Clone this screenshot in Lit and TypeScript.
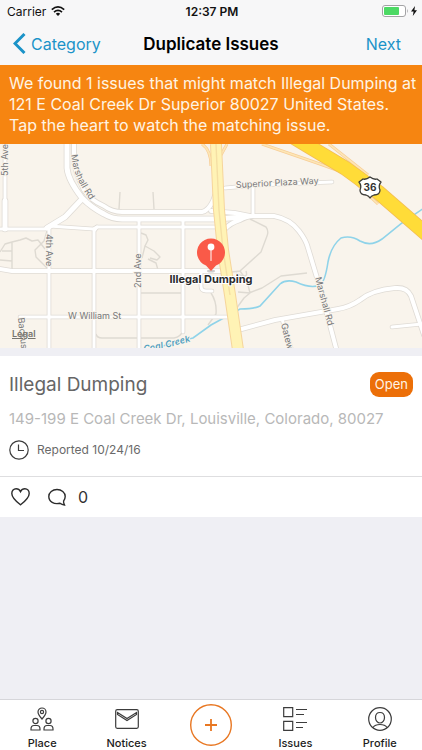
import { LitElement, html, svg, css } from "lit";
import { customElement } from "lit/decorators.js";

const font = css`Inter, Roboto, "Liberation Sans", sans-serif`;

/* Street geometry, in map units. */
const streets: { d: string; w: number }[] = [
  { d: "M5 144V200", w: 3 },
  { d: "M5 201V229", w: 5 },
  { d: "M0 229H45L49 226L93 229L97 227H222", w: 3 },
  { d: "M82 199L65 217L47 228", w: 5 },
  { d: "M49 228V348", w: 3 },
  { d: "M97 227L94 231V348", w: 3 },
  { d: "M139 219V348", w: 3 },
  { d: "M183 219V332", w: 3 },
  { d: "M0 269L12 271H226", w: 4 },
  { d: "M20 317H230", w: 3 },
  { d: "M74 144V160Q75 172 84 190Q90 200 104 206Q112 212 122 212H202Q208 211 213 201L217 190", w: 4 },
  { d: "M67 144V168Q68 180 82 198Q92 208 104 214Q112 219 122 219H216L244 217", w: 5 },
  { d: "M211 211L235 213L250 216", w: 4 },
  { d: "M225 188L258 185L332 182", w: 3 },
  { d: "M253 186V215", w: 3 },
  { d: "M224 230Q230 223 240 220Q247 216 254 216H274Q290 219 299 231Q306 240 308 248L321 291L336 348", w: 4 },
  { d: "M238 330L275 320L338 309Q350 307 360 300Q372 290 395 288Q407 287 411 296L424 335", w: 4 },
  { d: "M392 327L422 324", w: 3 },
  { d: "M282 319L291 348", w: 3 },
  { d: "M201 272V286Q201 291 206 291H212", w: 3 },
];

const paths =
  "M120 192L119 209M153 192L154 209M141 293H182M96 334Q97 338 102 338H174Q181 337 183 330" +
  "M250 219L266 227Q269 231 267 236L261 252L240 271L232 272M307 273L281 276L262 288L249 293" +
  "M240 271L247 281L250 293L244 298L236 309M250 293L238 292M236 273Q249 280 246 271" +
  "M0 252L5 244L12 242L20 240L26 238L32 241L38 240L45 249M0 260L12 261M2 251H12M12 242V269M47 231L44 241L35 250L36 257L48 269" +
  "M141 233L146 235L148 240L145 246L154 251L160 257L157 260L150 258M145 246L142 258M148 259L156 263L158 270" +
  "M211 293Q217 302 216 314L208 325";

const creek =
  "M150 350Q178 341 193 338L211 325L240 309Q254 309 260 306L280 284Q286 279 296 282Q311 289 320 285Q325 282 328 262Q331 246 341 238Q351 235 360 241Q371 247 382 239L402 223L424 208";

const ramps = "M202 144Q211 150 211 166M227 144L221 155M262 144L320 164L345 173L378 204M329 144L368 175";
const highway = "M290 135L305 144L345 168L378 192L430 237";

const mapArt = svg`
  <rect y="144" width="422" height="204" fill="#f9f4ec" />
  <path d=${paths} fill="none" stroke="#dedad2" stroke-width="1.4" stroke-linejoin="round" />
  <path d=${creek} fill="none" stroke="#8fd3e9" stroke-width="1.6" />
  <g fill="none" stroke="#dfdbd5" stroke-linejoin="round" stroke-linecap="round">
    ${streets.map((s) => svg`<path d=${s.d} stroke-width=${s.w + 1.6} />`)}
  </g>
  <g fill="none" stroke="#ffffff" stroke-linejoin="round" stroke-linecap="round">
    ${streets.map((s) => svg`<path d=${s.d} stroke-width=${s.w} />`)}
  </g>
  <g fill="none" stroke-linejoin="round">
    <path d=${ramps} stroke="#f7cd96" stroke-width="3" />
    <path d=${ramps} stroke="#fde6b6" stroke-width="1.6" />
    <path d="M216 144L219 210L223 250L230 295L238 350" stroke="#f6d59b" stroke-width="12" />
    <path d="M216 144L219 210L223 250L230 295L238 350" stroke="#fff3b5" stroke-width="10" />
    <path d="M216 144L219 210L223 250L230 295" stroke="#f5dfa4" stroke-width="1.4" />
    <path d=${highway} stroke="#f3bd55" stroke-width="15" />
    <path d=${highway} stroke="#ffdc38" stroke-width="13.5" />
  </g>
  <path d="M363 179Q366 180 370 177Q374 180 377 179L381 182Q378 186 380 190Q380 195 374 195Q371 196 370 198Q369 196 366 195Q360 195 360 190Q362 186 359 182Z"
    fill="#fff" stroke="#3b3b38" stroke-width="1.3" stroke-linejoin="round" />
  <text class="shield" x="370" y="191" text-anchor="middle">36</text>
  <defs>
    <path id="curve" d="M71 155L73 166Q76 180 92 203" />
    <path id="water" d="M144 352Q168 348 195 340" />
  </defs>
  <g class="road">
    <text transform="translate(8 176) rotate(-90)">5th Ave</text>
    <text><textPath href="#curve">Marshall Rd</textPath></text>
    <text transform="translate(46 234) rotate(90)">4th Ave</text>
    <text transform="translate(141 288) rotate(-90)">2nd Ave</text>
    <text x="68" y="319">W William St</text>
    <text transform="translate(236 188) rotate(-3)">Superior Plaza Way</text>
    <text transform="translate(315 278) rotate(75)">Marshall Rd</text>
    <text transform="translate(281 324) rotate(76)">Gatew</text>
    <text transform="translate(18 318) rotate(84)">Backus</text>
    <text class="water"><textPath href="#water">Coal Creek</textPath></text>
  </g>
  <ellipse cx="211" cy="271" rx="4" ry="1.5" fill="#000" opacity=".2" />
  <path d="M211 271L206 265.5A14 14 0 1 1 216 265.5Z" fill="#fa5a48" />
  <path d="M211 248V260.500" stroke="#ffe3df" stroke-width="1.200" stroke-linecap="round" />
  <circle cx="211" cy="247" r="3.400" fill="#fff" />
  <text class="place" x="211" y="283" text-anchor="middle">Illegal Dumping</text>
`;

const icon = (w: number, h: number, art: unknown) =>
  html`<svg class="icon" width=${w} height=${h} viewBox="0 0 ${w} ${h}" aria-hidden="true">${art}</svg>`;

const tabs = [
  {
    label: "Place",
    art: icon(24, 24, svg`
      <path d="M12 12Q8 7.500 8 5A4 4 0 0 1 16 5Q16 7.500 12 12Z" /><circle cx="12" cy="5" r="1.600" />
      <circle cx="5.500" cy="14" r="2.600" /><circle cx="18.500" cy="14" r="2.600" />
      <path d="M1 23V22Q1 18.500 4 18.500H7Q10 18.500 10 22V23ZM14 23V22Q14 18.500 17 18.500H20Q23 18.500 23 22V23Z" />`),
  },
  {
    label: "Notices",
    art: icon(24, 24, svg`
      <rect x="0.700" y="2.700" width="22.600" height="18.600" rx="1.500" />
      <path d="M2.500 5.500L12 11.500L21.500 5.500V7.500L12 13.500L2.500 7.500Z" />`),
  },
  { label: "", art: html`` },
  {
    label: "Issues",
    art: icon(24, 24, svg`
      <path d="M.7 .7H9.700V9.700H.7ZM.7 14.300H9.700V23.300H.7ZM13 2.500H24M13 7.500H21M13 15.500H24M13 20.500H20" />`),
  },
  {
    label: "Profile",
    art: icon(24, 24, svg`
      <circle cx="12" cy="12" r="11.300" />
      <path d="M12 5.500C15 5.500 16.500 7.500 16.500 10.500S14.500 16 12 16S7.500 13.500 7.500 10.500S9 5.500 12 5.500ZM5 20.500Q7 17.500 12 17.500T19 20.500" />`),
  },
];

@customElement("issue-map")
class IssueMap extends LitElement {
  static styles = css`
    :host { display: block; position: relative; }
    .map { display: block; width: 100%; height: auto; font-family: ${font}; }
    .road { font-size: 9px; fill: #77787a; stroke: #f9f4ec; stroke-width: 2px; paint-order: stroke; }
    .water { fill: #4f9fc0; font-weight: 600; font-style: italic; }
    .shield { font-size: 10px; font-weight: 700; fill: #333; }
    .place { font-size: 11px; font-weight: 700; fill: #2b2b2b; stroke: #fff; stroke-width: 2px; paint-order: stroke; }
    .legal { position: absolute; left: 12px; bottom: 8px; font: 600 9px/12px ${font}; color: #77756f; }
  `;
  render() {
    return html`
      <svg class="map" viewBox="0 144 422 204" role="img" aria-label="Map of the reported issue">${mapArt}</svg>
      <a class="legal" href="#legal">Legal</a>
    `;
  }
}

@customElement("app-root")
class AppRoot extends LitElement {
  static styles = css`
    * { box-sizing: border-box; }
    :host { display: flex; flex-direction: column; min-height: 100vh; background: #efeff4; font-family: ${font}; color: #222; }
    button { font: inherit; color: inherit; background: none; border: 0; padding: 0; margin: 0; }
    .icon { display: block; fill: none; stroke: #3c3c3c; stroke-width: 1.2px; overflow: visible; }
    .status, .nav { display: grid; grid-template-columns: 1fr auto 1fr; align-items: center; background: #f7f7f8; }
    .status { height: 22px; padding: 0 5px 0 7px; font-size: 12px; color: #111; }
    .carrier, .power { display: flex; align-items: center; gap: 5px; }
    .power { justify-self: end; gap: 3px; }
    .time { font-weight: 600; }
    .nav { height: 43px; padding: 0 13px; font-size: 16px; color: #1b93c8; }
    .back { display: flex; align-items: center; gap: 5px; justify-self: start; }
    .next { justify-self: end; padding: 0 8px; }
    .title { margin: 0; font-size: 17px; font-weight: 600; color: #000; }
    .banner { margin: 0; padding: 8px 4px 8px 9px; background: #f68511; color: #fff4e4; font-size: 16px; line-height: 21px; }
    .card { margin-top: 8px; background: #fff; }
    .body { display: grid; gap: 12px; padding: 16px 9px; border-bottom: 1px solid #dedee0; }
    .head { display: flex; justify-content: space-between; align-items: center; }
    .name { margin: 0; font-size: 19px; line-height: 25px; font-weight: 400; color: #666; }
    .state { padding: 0 5px; border-radius: 9px; background: #ec6f08; color: #fff4e4; font-size: 13px; line-height: 25px; }
    .address { margin: 0; font-size: 15px; line-height: 19px; color: #b8b8b8; }
    .reported { display: flex; align-items: center; gap: 8px; font-size: 12px; line-height: 20px; color: #6a6a6a; }
    .actions { display: flex; align-items: center; height: 40px; padding: 0 11px; gap: 18px; }
    .comments { display: flex; align-items: center; gap: 12px; font-size: 16px; color: #333; }
    .actions .icon { stroke: #2c2c2c; stroke-width: 1.4px; }
    .tabs { display: grid; grid-template-columns: repeat(5, 1fr); margin-top: auto; height: 51px; background: #fff; border-top: 1px solid #d6d6da; }
    .tab { display: flex; flex-direction: column; align-items: center; gap: 5px; padding-top: 7px; font-size: 11px; line-height: 14px; font-weight: 500; color: #1c1c1c; }
    .add { display: grid; place-items: center; }
    .add .icon { stroke: #e87722; stroke-width: 1.4px; }
    .add .plus { stroke-width: 1.8px; }
  `;

  render() {
    return html`
      <div class="status">
        <span class="carrier">Carrier
          <svg width="14" height="10" viewBox="0 0 14 10" aria-hidden="true">
            <path d="M.8 3.600Q7-1.800 13.200 3.600M3 6.100Q7 2.700 11 6.100" fill="none" stroke="#111" stroke-width="1.700" />
            <path d="M4.800 7.700Q7 6 9.200 7.700L7 10Z" fill="#111" />
          </svg>
        </span>
        <span class="time">12:37 PM</span>
        <span class="power">
          <svg width="26" height="12" viewBox="0 0 26 12" aria-hidden="true">
            <rect x=".5" y=".5" width="23" height="11" rx="2.500" fill="#fff" stroke="#a3a3a5" />
            <rect x="2" y="2" width="15" height="8" rx="1" fill="#4cd964" />
            <path d="M25 4Q26.500 6 25 8Z" fill="#a3a3a5" />
          </svg>
          <svg width="6" height="10" viewBox="0 0 6 10" aria-hidden="true"><path d="M4 0L0 5.600H2.600L1.800 10L6 4.200H3.400Z" fill="#111" /></svg>
        </span>
      </div>
      <header class="nav">
        <button class="back">
          <svg width="13" height="21" viewBox="0 0 13 21" aria-hidden="true"><path d="M11.500 1L2 10.500L11.500 20" fill="none" stroke="#1b93c8" stroke-width="3" /></svg>
          Category
        </button>
        <h1 class="title">Duplicate Issues</h1>
        <button class="next">Next</button>
      </header>
      <p class="banner">
        We found 1 issues that might match Illegal Dumping at 121 E Coal Creek Dr Superior 80027 United States.<br />Tap the heart to watch the matching issue.
      </p>
      <issue-map></issue-map>
      <article class="card">
        <div class="body">
          <div class="head"><h2 class="name">Illegal Dumping</h2><span class="state">Open</span></div>
          <p class="address">149-199 E Coal Creek Dr, Louisville, Colorado, 80027</p>
          <div class="reported">
            ${icon(20, 20, svg`<circle cx="10" cy="10" r="9.200" /><path d="M9.500 4.500V10.500H15" />`)}
            <span>Reported 10/24/16</span>
          </div>
        </div>
        <div class="actions">
          <button aria-label="Watch">
            ${icon(19, 18, svg`<path d="M9.500 16.800C6 14 .8 10 .8 5.400C.8 2.700 2.700 .8 5.100 .8C7 .8 8.700 2 9.500 3.600C10.300 2 12 .8 13.900 .8C16.300 .8 18.200 2.700 18.200 5.400C18.200 10 13 14 9.500 16.800Z" />`)}
          </button>
          <button class="comments" aria-label="Comments: 0">
            ${icon(18, 18, svg`<path d="M9 1.500C13.500 1.500 17.200 4.300 17.200 8.500C17.200 10.800 16 12.400 15.600 13C15.300 14.500 15.800 15.500 16.500 17C14.500 16.800 13 16 12 15.200C6 16.800 .8 13.500 .8 8.500C.8 4.300 4.500 1.500 9 1.500Z" />`)}
            0
          </button>
        </div>
      </article>
      <nav class="tabs">
        ${tabs.map((t) =>
          t.label
            ? html`<button class="tab">${t.art}<span>${t.label}</span></button>`
            : html`<button class="add" aria-label="Add issue">
                ${icon(42, 42, svg`<circle cx="21" cy="21" r="20.300" /><path class="plus" d="M15 21H27M21 15V27" />`)}
              </button>`
        )}
      </nav>
    `;
  }
}
